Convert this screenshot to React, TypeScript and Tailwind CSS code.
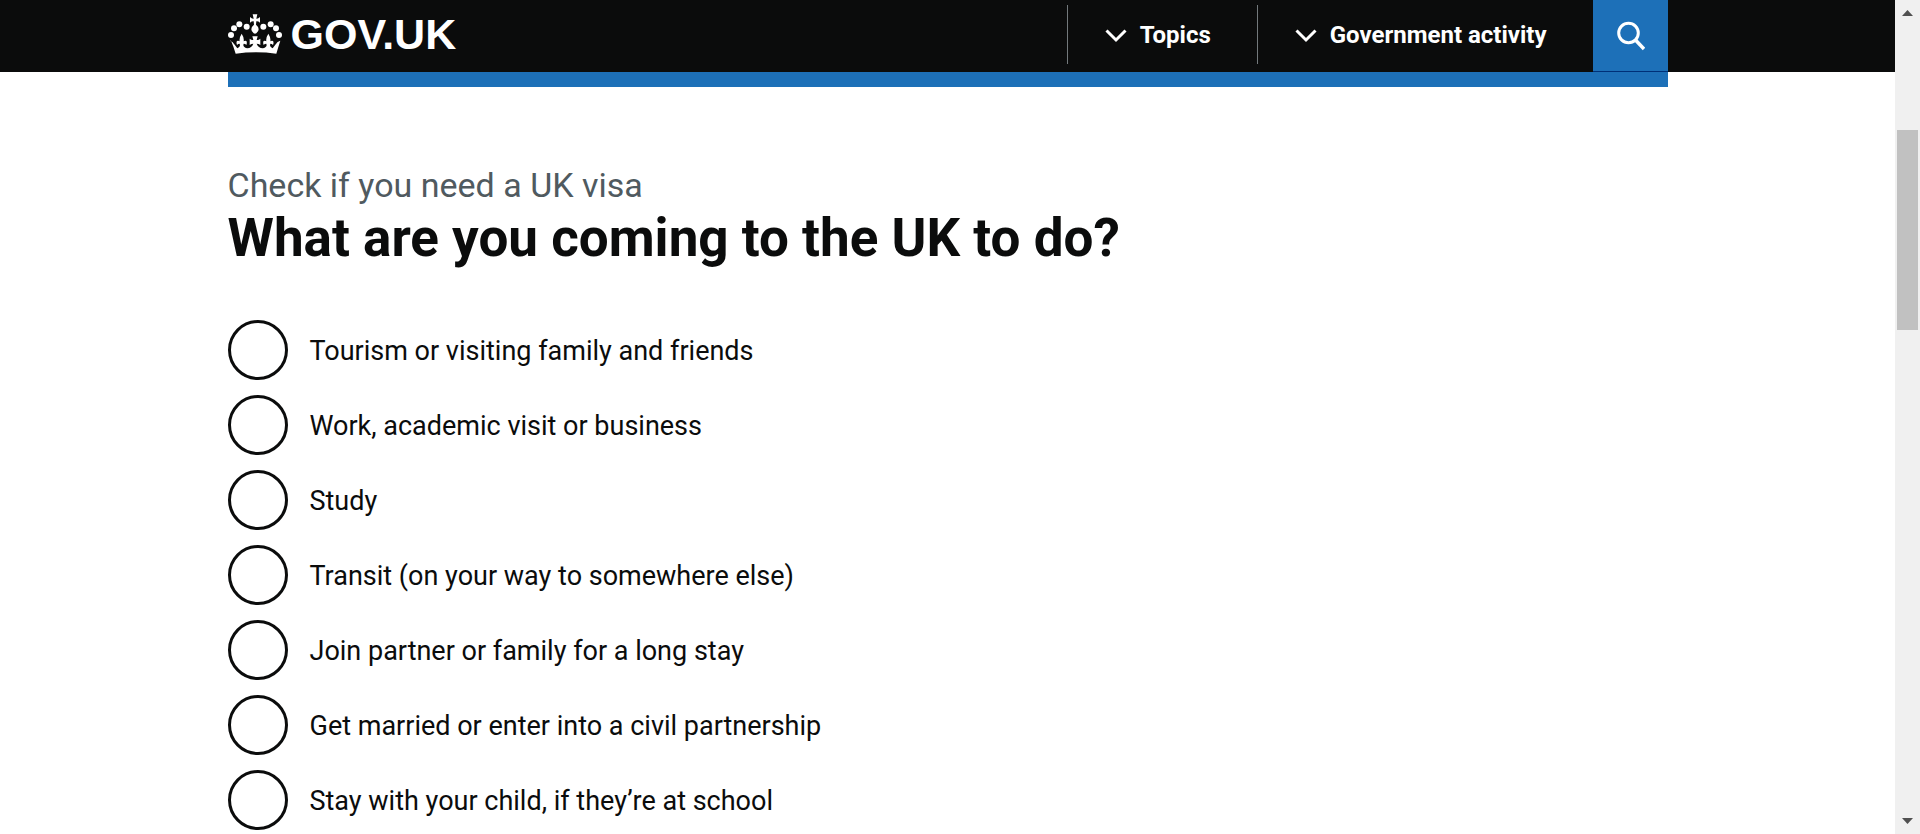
const purposes = [
  { value: "tourism", label: "Tourism or visiting family and friends" },
  { value: "work", label: "Work, academic visit or business" },
  { value: "study", label: "Study" },
  { value: "transit", label: "Transit (on your way to somewhere else)" },
  { value: "family", label: "Join partner or family for a long stay" },
  { value: "marriage", label: "Get married or enter into a civil partnership" },
  { value: "school", label: "Stay with your child, if they’re at school" },
];

function Crown() {
  return (
    <svg viewBox="12 15 162 120" className="h-10 w-[54px]" fill="currentColor" aria-hidden="true">
      <circle cx="21" cy="78" r="9" />
      <circle cx="30" cy="58" r="9" />
      <circle cx="46" cy="46" r="9" />
      <circle cx="68" cy="53" r="9" />
      <circle cx="118" cy="53" r="9" />
      <circle cx="140" cy="46" r="9" />
      <circle cx="156" cy="58" r="9" />
      <circle cx="165" cy="78" r="9" />
      <path d="M86 16h14l-3 13q5 1 11-5v17q-6-5-11-4l-1 10q8 6 8 14 0 7-7 12l-4 1-4-1q-7-5-7-12 0-8 8-14l-1-10q-5-1-11 4V24q6 6 11 5z" />
      <path d="M17 95q9 2 15 12l8 11q7-1 8-9l-1-5q-5 0-8 4-3-7 0-12 4-2 8 1-2-11 6-23 8 12 6 23 4-3 8-1 3 5 0 12-3-4-8-4l-1 5q2 8 12 9 13-1 18-14-6 0-11 4V89q5 5 11 4l-3-11h16l-3 11q6 1 11-4v19q-5-4-11-4 5 13 18 14 10-1 12-9l-1-5q-5 0-8 4-3-7 0-12 4-2 8 1-2-11 6-23 8 12 6 23 4-3 8-1 3 5 0 12-3-4-8-4l-1 5q1 8 8 9l8-11q6-10 15-12-6 18-12 39-61-8-122 0-6-21-14-39z" />
    </svg>
  );
}

function MenuButton({ children }: { children: string }) {
  return (
    <button type="button" className="mt-[5px] mb-2 flex items-center gap-[13px] border-l border-[#73797c] pr-[46px] pl-[37px] text-2xl font-bold">
      <svg viewBox="0 0 22 16" className="h-4 w-[22px]" fill="none" stroke="currentColor" strokeWidth="3" aria-hidden="true">
        <path d="M1.500 3.500 11 13l9.500-9.500" />
      </svg>
      {children}
    </button>
  );
}

function Scrollbar() {
  return (
    <div aria-hidden="true" className="sticky top-0 flex h-screen w-[25px] shrink-0 flex-col items-center bg-[#f0f0f0]">
      <svg viewBox="0 0 25 25" className="size-[25px] shrink-0" fill="#505050">
        <path d="M7 16h11l-5.500-6z" />
      </svg>
      <div className="flex-[105]" />
      <div className="w-[21px] flex-[200] bg-[#c1c1c1]" />
      <div className="flex-[479]" />
      <svg viewBox="0 0 25 25" className="size-[25px] shrink-0" fill="#505050">
        <path d="M7 9h11l-5.500 6z" />
      </svg>
    </div>
  );
}

export default function App() {
  return (
    <div className="flex min-h-screen bg-white font-[Roboto,'Liberation_Sans',sans-serif] text-[#0b0c0c]">
      <div className="min-w-0 flex-1">
        <header className="bg-[#0b0c0c] px-6 text-white">
          <div className="mx-auto flex h-[72px] max-w-[1440px] justify-between">
            <a href="#" className="flex items-center gap-[9px] pb-[5px]">
              <Crown />
              <span className="pt-0.5 font-['Liberation_Sans',Arial,sans-serif] text-[43px] leading-none font-bold">GOV.UK</span>
            </a>
            <nav aria-label="Menu" className="flex">
              <MenuButton>Topics</MenuButton>
              <MenuButton>Government activity</MenuButton>
              <button type="button" aria-label="Search GOV.UK" className="flex w-[75px] items-center justify-center border-b border-[#003078] bg-[#1d70b8]">
                <svg viewBox="0 0 30 30" className="size-[30px]" fill="none" stroke="currentColor" strokeWidth="3" aria-hidden="true">
                  <circle cx="13.500" cy="12" r="9.800" />
                  <path d="M20.500 19 29 28" strokeWidth="3.500" />
                </svg>
              </button>
            </nav>
          </div>
        </header>
        <div className="px-6">
          <div className="mx-auto h-[15px] max-w-[1440px] bg-[#1d70b8]" />
          <main className="mx-auto max-w-[1440px] pt-[75px]">
            <form>
              <fieldset>
                <legend>
                  <span className="block text-[34px] leading-[46px] text-[#505a5f]">Check if you need a UK visa</span>
                  <h1 className="text-[53px] leading-[60px] font-bold">What are you coming to the UK to do?</h1>
                </legend>
                <div className="mt-[52px] flex flex-col gap-[15px]">
                  {purposes.map(({ value, label }) => (
                    <div key={value} className="flex items-center">
                      <input
                        type="radio"
                        id={value}
                        name="purpose"
                        value={value}
                        className="size-[60px] shrink-0 cursor-pointer appearance-none rounded-full border-3 border-[#0b0c0c] bg-white checked:bg-[#0b0c0c] checked:shadow-[inset_0_0_0_12px_white]"
                      />
                      <label htmlFor={value} className="cursor-pointer px-[22px] pt-0.5 text-[27px] leading-9">
                        {label}
                      </label>
                    </div>
                  ))}
                </div>
              </fieldset>
            </form>
          </main>
        </div>
      </div>
      <Scrollbar />
    </div>
  );
}
